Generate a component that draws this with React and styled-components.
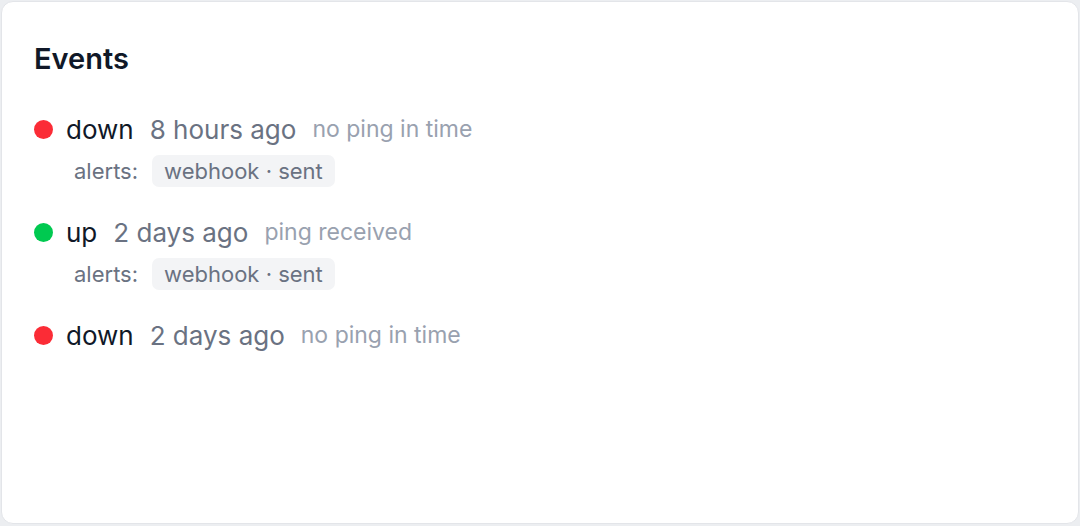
import React from "react";
import styled, { createGlobalStyle } from "styled-components";

const Global = createGlobalStyle`
  html, body { margin: 0; padding: 0; background: #eceef1; }
  body { font-family: "Inter", "Noto Sans", sans-serif; }
  #root { padding: 1px; }
`;

const Card = styled.section`
  box-sizing: border-box;
  width: 1078px;
  height: 523px;
  background: #ffffff;
  border: 1px solid #e3e5e9;
  border-radius: 12px;
  padding: 37px 32px;
`;

const Title = styled.h2`
  margin: 0 0 30px;
  font-size: 29px;
  font-weight: 600;
  color: #101828;
  line-height: 40px;
`;

const List = styled.div`
  display: flex;
  flex-direction: column;
  gap: 25px;
`;

const Event = styled.div`
  display: flex;
  flex-direction: column;
  gap: 6px;
`;

const Line = styled.div`
  display: flex;
  align-items: center;
  height: 40px;
`;

const Dot = styled.span`
  width: 19px;
  height: 19px;
  border-radius: 50%;
  background: ${(p) => (p.$status === "up" ? "#00c950" : "#fb2c36")};
  margin-right: 13px;
  flex: none;
`;

const Status = styled.span`
  font-size: 26px;
  color: #101828;
  margin-right: 16px;
`;

const Time = styled.span`
  font-size: 26px;
  color: #6a7282;
  margin-right: 16px;
`;

const Reason = styled.span`
  font-size: 23px;
  color: #99a1af;
`;

const Alerts = styled.div`
  display: flex;
  align-items: center;
  gap: 14px;
  padding-left: 40px;
`;

const AlertLabel = styled.span`
  font-size: 22px;
  color: #6a7282;
`;

const Chip = styled.span`
  background: #f3f4f6;
  border-radius: 7px;
  padding: 0 12px;
  height: 32px;
  display: inline-flex;
  align-items: center;
  font-size: 22px;
  color: #6a7282;
`;

const events = [
  { status: "down", time: "8 hours ago", reason: "no ping in time", alerts: ["webhook · sent"] },
  { status: "up", time: "2 days ago", reason: "ping received", alerts: ["webhook · sent"] },
  { status: "down", time: "2 days ago", reason: "no ping in time", alerts: [] },
];

export default function App() {
  return (
    <>
      <Global />
      <Card>
        <Title>Events</Title>
        <List>
          {events.map((e, i) => (
            <Event key={i}>
              <Line>
                <Dot $status={e.status} />
                <Status>{e.status}</Status>
                <Time>{e.time}</Time>
                <Reason>{e.reason}</Reason>
              </Line>
              {e.alerts.length > 0 && (
                <Alerts>
                  <AlertLabel>alerts:</AlertLabel>
                  {e.alerts.map((a) => (
                    <Chip key={a}>{a}</Chip>
                  ))}
                </Alerts>
              )}
            </Event>
          ))}
        </List>
      </Card>
    </>
  );
}
